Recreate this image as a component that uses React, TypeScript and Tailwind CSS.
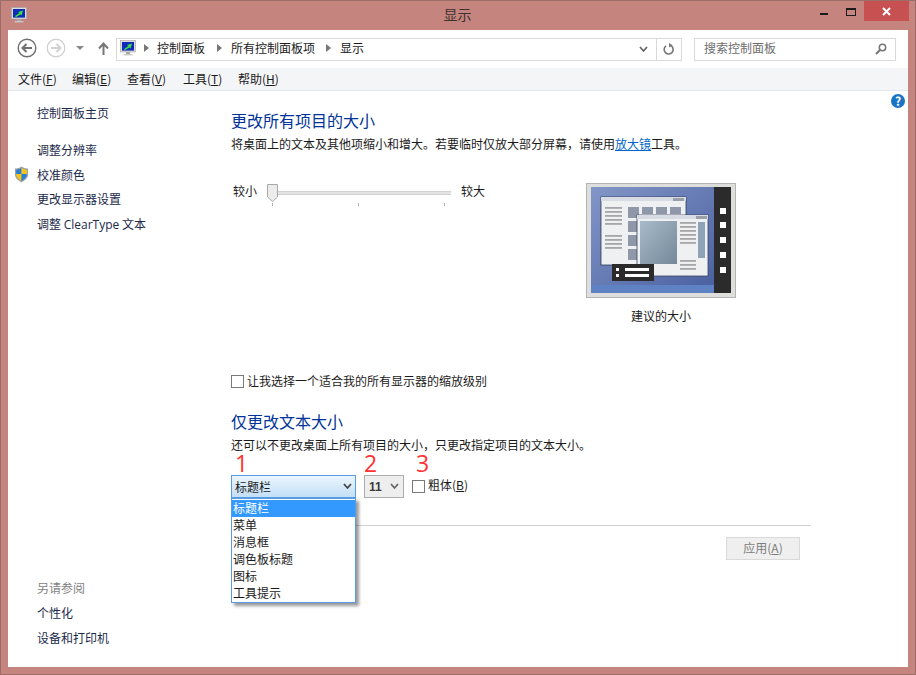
import React from 'react';

const font = "font-['Noto_Sans_CJK_SC','Noto_Sans',sans-serif]";

function MonitorIcon() {
  return (
    <svg width="16" height="16" viewBox="0 0 16 16">
      <rect x="0.500" y="0.500" width="15" height="11.500" fill="#dcdcdc" stroke="#a4a4a4" strokeWidth="0.6" />
      <rect x="2" y="2" width="12" height="8.600" fill="#0b2bb8" />
      <path d="M12 3.500 L7 5 L8.500 6 L4 9 L5 10 L9.500 7.400 L10.500 8.400 Z" fill="#3fe03f" />
      <rect x="6" y="12" width="4" height="2" fill="#a8a8a8" />
      <rect x="3.500" y="14" width="9" height="1.400" fill="#c8c8c8" />
    </svg>
  );
}

function NavArrow({ dir, color }: { dir: 'left' | 'right'; color: string }) {
  return (
    <svg width="20" height="20" viewBox="0 0 20 20">
      <circle cx="10" cy="10" r="8.800" fill="#fff" stroke={color} strokeWidth="1.400" />
      {dir === 'left' ? (
        <path d="M15 10H6M9.500 6 5.500 10l4 4" fill="none" stroke={color} strokeWidth="2" />
      ) : (
        <path d="M5 10h9M10.500 6l4 4-4 4" fill="none" stroke={color} strokeWidth="2" />
      )}
    </svg>
  );
}

function Crumb() {
  return (
    <svg width="5" height="8" viewBox="0 0 5 8" className="shrink-0 mb-[2px]">
      <path d="M0 0l5 4-5 4z" fill="#777" />
    </svg>
  );
}

function Chevron({ color = '#444' }: { color?: string }) {
  return (
    <svg width="9" height="7" viewBox="0 0 9 7">
      <path d="M1 1l3.500 4L8 1" fill="none" stroke={color} strokeWidth="1.800" />
    </svg>
  );
}

function Shield() {
  return (
    <svg width="15" height="17" viewBox="0 0 15 17">
      <path d="M7.500.6C5.500 2 3.200 2.600 1 2.600v6c0 3.600 3 6 6.500 7.800C11 14.600 14 12.200 14 8.600v-6c-2.200 0-4.500-.6-6.500-2z" fill="#9aa0a6" />
      <path d="M7.500 2C6 3 4.200 3.600 2.200 3.700V8h5.300z" fill="#2a7fd4" />
      <path d="M7.500 2c1.500 1 3.300 1.600 5.300 1.700V8H7.500z" fill="#f5c518" />
      <path d="M2.200 8h5.300v6.900C4.500 13.300 2.200 11.200 2.200 8z" fill="#f5c518" />
      <path d="M12.800 8H7.500v6.900c3-1.600 5.300-3.700 5.300-6.900z" fill="#2a7fd4" />
    </svg>
  );
}

function PreviewArt() {
  return (
    <svg width="150" height="115" viewBox="0 0 150 115">
      <defs>
        <linearGradient id="desk" x1="0" y1="0" x2="1" y2="1">
          <stop offset="0" stopColor="#8296c8" />
          <stop offset="1" stopColor="#4a5f9f" />
        </linearGradient>
        <linearGradient id="pic" x1="0" y1="0" x2="1" y2="1">
          <stop offset="0" stopColor="#a9bbc9" />
          <stop offset="1" stopColor="#74889a" />
        </linearGradient>
      </defs>
      <rect x="0.500" y="0.500" width="149" height="114" fill="#dededc" stroke="#b4b4b2" />
      <rect x="5" y="4" width="123" height="106" fill="url(#desk)" />
      <rect x="5" y="102" width="123" height="8" fill="#5f82c4" />
      <rect x="128" y="4" width="17" height="106" fill="#2b2b2b" />
      {[25, 39, 54, 69, 84].map((y) => (
        <rect key={y} x="134" y={y} width="6" height="6" fill="#fff" />
      ))}
      <rect x="15" y="14" width="85" height="68" fill="#eef0f2" stroke="#2f3a55" strokeWidth="0.800" />
      <rect x="15" y="14" width="85" height="4" fill="#d6dbe4" />
      <rect x="87" y="15" width="11" height="3" fill="#9a9fa8" />
      {[24, 28, 32, 36, 40, 52, 56, 60, 64].map((y) => (
        <rect key={y} x="19" y={y} width="17" height="1.800" fill="#a6a6a6" />
      ))}
      {[24, 38, 52, 66].map((y) => (
        <rect key={y} x="42" y={y} width="11" height="11" fill="#8e98a8" />
      ))}
      {[56, 70, 84].map((x) => (
        <rect key={x} x={x} y="24" width="11" height="7" fill="#8e98a8" />
      ))}
      <rect x="51" y="32" width="71" height="61" fill="#eef0f2" stroke="#3a4560" strokeWidth="0.800" />
      <rect x="51" y="32" width="71" height="4" fill="#d6dbe4" />
      <rect x="110" y="33" width="11" height="3" fill="#9a9fa8" />
      <rect x="54" y="38" width="37" height="43" fill="url(#pic)" />
      {[39, 43, 47, 51, 55, 59].map((y) => (
        <rect key={y} x="94" y={y} width="16" height="1.800" fill="#a6a6a6" />
      ))}
      <rect x="112" y="39" width="7" height="36" fill="#8ea3b8" />
      {[77, 81, 85].map((y) => (
        <rect key={y} x="94" y={y} width="16" height="1.800" fill="#a6a6a6" />
      ))}
      <rect x="26" y="81" width="42" height="17" fill="#2b2b2b" />
      <rect x="30" y="85" width="3" height="3" fill="#fff" />
      <rect x="30" y="91" width="3" height="3" fill="#fff" />
      <rect x="39" y="85" width="24" height="3" fill="#fff" />
      <rect x="39" y="91" width="24" height="3" fill="#fff" />
    </svg>
  );
}

function Accel({ label, k }: { label: string; k: string }) {
  return (
    <span>
      {label}(<span className="underline">{k}</span>)
    </span>
  );
}

export default function App() {
  const dropdownItems = ['标题栏', '菜单', '消息框', '调色板标题', '图标', '工具提示'];

  return (
    <div className={`${font} w-[916px] h-[675px] flex flex-col bg-[#c5847e] border border-[#9b6c68] text-[12px] leading-[18px] text-[#1a1a1a] overflow-hidden`}>
      {/* title bar */}
      <div className="h-[29px] shrink-0 flex items-start relative">
        <div className="ml-[10px] mt-[6px]">
          <MonitorIcon />
        </div>
        <div className="flex-1 text-center text-[14px] leading-[20px] mt-[3px] text-[#3b3130] pl-[78px]">显示</div>
        <div className="flex items-start">
          <div className="w-[27px] h-[20px] flex justify-center pt-[12px]">
            <div className="w-[8px] h-[2px] bg-[#1c1c1c]" />
          </div>
          <div className="w-[27px] h-[20px] flex justify-center pt-[7px]">
            <div className="w-[10px] h-[8px] border border-[#1c1c1c] border-t-2" />
          </div>
          <div className="w-[45px] h-[20px] bg-[#c75050] flex items-center justify-center">
            <svg width="9" height="9" viewBox="0 0 9 9">
              <path d="M1 1l7 7M8 1l-7 7" stroke="#fff" strokeWidth="2" />
            </svg>
          </div>
          <div className="w-[6px]" />
        </div>
      </div>

      {/* window body */}
      <div className="mx-[7px] mb-[7px] flex-1 flex flex-col bg-white min-h-0">
        {/* address row */}
        <div className="h-[38px] shrink-0 flex items-center">
          <div className="ml-[9px] mb-[2px]">
            <NavArrow dir="left" color="#6f6f6f" />
          </div>
          <div className="ml-[9px] mb-[2px]">
            <NavArrow dir="right" color="#d2d2d2" />
          </div>
          <svg width="8" height="4" viewBox="0 0 8 4" className="ml-[10px] mb-[2px]">
            <path d="M0 0h8L4 4z" fill="#888" />
          </svg>
          <svg width="11" height="13" viewBox="0 0 11 13" className="ml-[14px] mb-[2px]">
            <path d="M5.500 13V2M1 6.500 5.500 1.500 10 6.500" fill="none" stroke="#777" strokeWidth="2" />
          </svg>
          <div className="ml-[7px] w-[566px] h-[23px] border border-[#d9d9d9] flex items-center">
            <div className="ml-[3px] mb-[2px]">
              <MonitorIcon />
            </div>
            <div className="ml-[8px] flex">
              <Crumb />
            </div>
            <span className="ml-[8px] mb-[2px]">控制面板</span>
            <div className="ml-[12px] flex">
              <Crumb />
            </div>
            <span className="ml-[9px] mb-[2px]">所有控制面板项</span>
            <div className="ml-[11px] flex">
              <Crumb />
            </div>
            <span className="ml-[9px] mb-[2px]">显示</span>
            <div className="ml-auto w-[25px] flex justify-center">
              <Chevron color="#666" />
            </div>
            <div className="w-[25px] h-full border-l border-[#d9d9d9] flex items-center justify-center">
              <svg width="12" height="12" viewBox="0 0 12 12">
                <path d="M7.800 2.500A4.500 4.500 0 1 1 3 2.800" fill="none" stroke="#777" strokeWidth="1.600" />
                <path d="M6 0v4.500L9.500 2.200z" fill="#777" />
              </svg>
            </div>
          </div>
          <div className="ml-[12px] w-[202px] h-[23px] border border-[#d9d9d9] flex items-center pl-[9px] pr-[8px]">
            <span className="text-[#6d6d6d] mb-[2px]">搜索控制面板</span>
            <svg width="12" height="12" viewBox="0 0 12 12" className="ml-auto">
              <circle cx="7.500" cy="4.500" r="3.200" fill="none" stroke="#777" strokeWidth="1.500" />
              <path d="M5 7l-4 4" stroke="#777" strokeWidth="2.200" />
            </svg>
          </div>
        </div>

        {/* menu bar */}
        <div className="h-[23px] shrink-0 flex items-center bg-[#f4f5f7] border-b border-[#e4e6e9] pl-[10px]">
          <div className="w-[54px]"><Accel label="文件" k="F" /></div>
          <div className="w-[55px]"><Accel label="编辑" k="E" /></div>
          <div className="w-[56px]"><Accel label="查看" k="V" /></div>
          <div className="w-[55px]"><Accel label="工具" k="T" /></div>
          <div><Accel label="帮助" k="H" /></div>
        </div>

        {/* main */}
        <div className="flex-1 flex min-h-0 relative">
          <div className="absolute right-[3px] top-[3px] w-[14px] h-[14px] rounded-full bg-[#1a74c4] text-white text-[12px] leading-[14px] font-bold text-center">?</div>

          {/* sidebar */}
          <div className="w-[223px] shrink-0 flex flex-col justify-between pl-[29px] pt-[13px] pb-[20px] text-[#1b2a4a]">
            <div className="flex flex-col">
              <div className="h-[18px]">控制面板主页</div>
              <div className="h-[18px] mt-[19px]">调整分辨率</div>
              <div className="h-[18px] mt-[7px] relative">
                <div className="absolute left-[-23px] top-0">
                  <Shield />
                </div>
                校准颜色
              </div>
              <div className="h-[18px] mt-[6px]">更改显示器设置</div>
              <div className="h-[18px] mt-[7px]">
                调整 <span className="font-['Open_Sans',sans-serif]">ClearType</span> 文本
              </div>
            </div>
            <div className="flex flex-col">
              <div className="h-[18px] text-[#7f7f7f]">另请参阅</div>
              <div className="h-[18px] mt-[7px]">个性化</div>
              <div className="h-[18px] mt-[7px]">设备和打印机</div>
            </div>
          </div>

          {/* content */}
          <div className="w-[580px] flex flex-col pt-[18px]">
            <div className="h-[24px] text-[16px] leading-[22px] text-[#003399]">更改所有项目的大小</div>
            <div className="h-[18px] mt-[2px]">
              将桌面上的文本及其他项缩小和增大。若要临时仅放大部分屏幕，请使用<span className="text-[#0066cc] underline">放大镜</span>工具。
            </div>

            <div className="flex mt-[30px]">
              <div className="w-[355px] shrink-0 flex items-start">
                <span className="ml-[2px] h-[18px] w-[25px] shrink-0 leading-[16px]">较小</span>
                <div className="ml-[9px] w-[184px] shrink-0 pt-[1px]">
                  <div className="relative h-[18px] flex items-center">
                    <div className="w-full h-[4px] bg-[#e3e3e3] border-y border-[#d2d2d2]" />
                    <svg width="11" height="18" viewBox="0 0 11 18" className="absolute left-0 top-0">
                      <path d="M.500.500h10V13l-5 4.500-5-4.500z" fill="#ececec" stroke="#a8a8a8" />
                    </svg>
                  </div>
                  <div className="flex justify-between pl-[5px] pr-[6px] mt-[1px]">
                    <div className="w-px h-[3px] bg-[#b0b0b0]" />
                    <div className="w-px h-[3px] bg-[#b0b0b0]" />
                    <div className="w-px h-[3px] bg-[#b0b0b0]" />
                  </div>
                </div>
                <span className="ml-[10px] h-[18px] leading-[16px]">较大</span>
              </div>
              <div className="w-[150px] shrink-0 flex flex-col items-center">
                <PreviewArt />
                <div className="h-[18px] mt-[9px]">建议的大小</div>
              </div>
            </div>

            <div className="h-[18px] mt-[47px] flex items-center">
              <div className="w-[13px] h-[13px] border border-[#7a7a7a] bg-white" />
              <span className="ml-[3px]">让我选择一个适合我的所有显示器的缩放级别</span>
            </div>

            <div className="h-[24px] mt-[20px] text-[16px] leading-[22px] text-[#003399]">仅更改文本大小</div>
            <div className="h-[18px] mt-[2px]">还可以不更改桌面上所有项目的大小，只更改指定项目的文本大小。</div>

            <div className="grid grid-cols-[125px_40px_auto] justify-start gap-x-[8px] font-['Open_Sans',sans-serif] text-[23px] leading-[19px] text-[#ff3333] h-[21px]">
              <div className="pl-[4px]">1</div>
              <div>2</div>
              <div className="pl-[4px]">3</div>
            </div>

            <div className="grid grid-cols-[125px_40px_auto] justify-start gap-x-[8px] h-[23px]">
              <div className="relative">
                <div className="h-[23px] border border-[#569de5] bg-gradient-to-b from-[#ecf6fd] to-[#c3dff7] flex items-center pl-[3px] pr-[3px]">
                  <span>标题栏</span>
                  <div className="ml-auto">
                    <Chevron />
                  </div>
                </div>
                <div className="absolute left-0 top-[23px] w-[125px] h-[105px] border border-[#569de5] bg-white shadow-[3px_3px_3px_rgba(0,0,0,0.4)] pt-px z-10">
                  {dropdownItems.map((item, i) => (
                    <div key={item} className={`h-[17px] leading-[15px] pl-px ${i === 0 ? 'bg-[#3399ff] text-white' : ''}`}>
                      {item}
                    </div>
                  ))}
                </div>
              </div>
              <div className="h-[23px] border border-[#adadad] bg-[#eeeeee] flex items-center pl-[4px] pr-[4px] font-['Liberation_Sans',sans-serif] font-bold">
                <span className="text-[#3a3a3a]">11</span>
                <div className="ml-auto">
                  <Chevron color="#666" />
                </div>
              </div>
              <div className="flex items-center">
                <div className="w-[13px] h-[13px] border border-[#7a7a7a] bg-white" />
                <span className="ml-[3px] mb-[4px]"><Accel label="粗体" k="B" /></span>
              </div>
            </div>

            <div className="h-px bg-[#d0d0d0] mt-[27px]" />

            <div className="flex justify-end pr-[11px] mt-[11px]">
              <div className="w-[74px] h-[23px] border border-[#d9d9d9] bg-[#efefef] flex items-center justify-center text-[#7d7d7d] pb-[2px]">
                <Accel label="应用" k="A" />
              </div>
            </div>
          </div>
        </div>
      </div>
    </div>
  );
}
